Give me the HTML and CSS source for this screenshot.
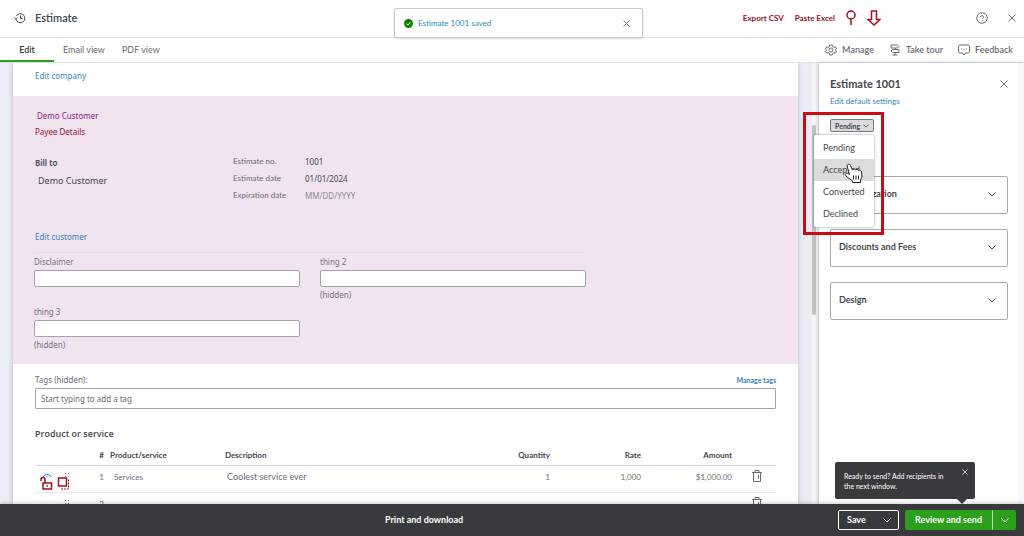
FILE: index.html
```html
<!DOCTYPE html>
<html lang="en">
  <head>
    <meta charset="UTF-8" />
    <meta name="viewport" content="width=device-width, initial-scale=1.0" />
    <title>Estimate 1001</title>
    <link rel="stylesheet" href="styles.css">
  </head>
  <body>
    <header class="topbar">
      <svg class="icon-history" width="12" height="12" viewBox="0 0 24 24">
        <path d="M4.500 8.500A9 9 0 1 1 4 15" />
        <path d="M1 11l3 3.500 3.500-3.500M13 7v6h4" />
      </svg>
      <h1>Estimate</h1>
      <div class="topbar-tools">
        <button class="tool">Export CSV</button>
        <button class="tool">Paste Excel</button>
        <button class="tool" aria-label="Pin">
          <svg width="10" height="16" viewBox="0 0 10 16"><circle cx="5" cy="5" r="4" /><path d="M5 9v6" /></svg>
        </button>
        <button class="tool" aria-label="Download">
          <svg width="14" height="16" viewBox="0 0 14 16"><path d="M4.500 1h5v8.500H13L7 15 1 9.500h3.500z" /></svg>
        </button>
      </div>
      <button class="icon-btn help" aria-label="Help">
        <svg width="12" height="12" viewBox="0 0 24 24"><circle cx="12" cy="12" r="10.500" /><path d="M9 10a3 3 0 1 1 4 3c-.8.300-1 .6-1 1.300M12 16.500v2" /></svg>
      </button>
      <button class="icon-btn" aria-label="Close">
        <svg width="8" height="8" viewBox="0 0 8 8"><path d="M.5.5l7 7M7.500.5l-7 7" /></svg>
      </button>
      <div class="toast">
        <svg class="toast-check" width="9" height="9" viewBox="0 0 18 18"><circle cx="9" cy="9" r="9" /><path d="M5 9.500l3 2.500 5-5.500" /></svg>
        <a href="#">Estimate 1001 saved</a>
        <button class="icon-btn" aria-label="Dismiss">
          <svg width="7" height="7" viewBox="0 0 8 8"><path d="M.5.5l7 7M7.500.5l-7 7" /></svg>
        </button>
      </div>
    </header>

    <nav class="tabs">
      <a class="tab active" href="#">Edit</a>
      <a class="tab" href="#">Email view</a>
      <a class="tab" href="#">PDF view</a>
      <div class="actions">
        <button class="action">
          <svg width="12" height="12" viewBox="0 0 24 24"><path d="M9.500 2h5l1 3.500 2 1.200 3.500-.9 2 4L20.500 12l2.500 2.200-2 4-3.500-.9-2 1.200-1 3.500h-5l-1-3.500-2-1.200-3.500.9-2-4L3.500 12 1 9.800l2-4 3.500.9 2-1.200z" /><circle cx="12" cy="12" r="4" /></svg>
          Manage
        </button>
        <button class="action">
          <svg width="12" height="12" viewBox="0 0 24 24"><path d="M4 2h13l3 3-3 3H4zM20 11H7l-3 3 3 3h13zM12 8v3M12 17v5M7 22h10" /></svg>
          Take tour
        </button>
        <button class="action">
          <svg width="12" height="12" viewBox="0 0 24 24"><path d="M4 2h16q3 0 3 3v10q0 3-3 3h-5l-3 4-3-4H4q-3 0-3-3V5q0-3 3-3zM6.500 10h2M11 10h2M15.500 10h2" /></svg>
          Feedback
        </button>
      </div>
    </nav>

    <main>
      <div class="editor">
        <div class="paper">
          <div class="company"><a href="#">Edit company</a></div>

          <section class="customer">
            <div class="customer-name">Demo Customer</div>
            <div class="payee">Payee Details</div>
            <div class="billing">
              <div class="bill-to">
                <strong>Bill to</strong>
                <div class="bill-name">Demo Customer</div>
              </div>
              <dl>
                <dt>Estimate no.</dt><dd>1001</dd>
                <dt>Estimate date</dt><dd>01/01/2024</dd>
                <dt>Expiration date</dt><dd class="empty">MM/DD/YYYY</dd>
              </dl>
            </div>
            <a class="edit-customer" href="#">Edit customer</a>
            <div class="fields">
              <div class="field">
                <label for="disclaimer">Disclaimer</label>
                <input type="text" id="disclaimer" />
              </div>
              <div class="field">
                <label for="thing2">thing 2</label>
                <input type="text" id="thing2" />
                <span>(hidden)</span>
              </div>
              <div class="field">
                <label for="thing3">thing 3</label>
                <input type="text" id="thing3" />
                <span>(hidden)</span>
              </div>
            </div>
          </section>

          <section class="lines">
            <div class="tags-head">
              <label for="tags">Tags (hidden):</label>
              <a href="#">Manage tags</a>
            </div>
            <input type="text" id="tags" placeholder="Start typing to add a tag" />
            <h2>Product or service</h2>
            <table>
              <thead>
                <tr>
                  <th class="col-tools"></th>
                  <th class="col-no">#</th>
                  <th class="col-product">Product/service</th>
                  <th>Description</th>
                  <th class="col-num">Quantity</th>
                  <th class="col-num">Rate</th>
                  <th class="col-num">Amount</th>
                  <th class="col-trash"></th>
                </tr>
              </thead>
              <tbody>
                <tr>
                  <td class="col-tools">
                    <svg width="32" height="20" viewBox="0 0 32 20">
                      <path class="arc" d="M3 6a4.300 4.300 0 0 1 8 0M6.500 5.500h1" />
                      <path class="red" d="M3 12h8.500v6H3zM1 10V8.500a2 2 0 0 1 4 0V12M6.500 15h1.500" />
                      <path class="grip" d="M25 2.500h1M28 2.500h1M25 5.500h1M28 5.500h1" />
                      <path class="red" d="M18.500 7h8v8h-8z" />
                      <path class="red dashed" d="M28.500 8.500v9.500H20" />
                    </svg>
                  </td>
                  <td class="col-no">1</td>
                  <td class="product">Services</td>
                  <td class="desc">Coolest service ever</td>
                  <td class="col-num">1</td>
                  <td class="col-num">1,000</td>
                  <td class="col-num">$1,000.00</td>
                  <td class="col-trash">
                    <button class="icon-btn" aria-label="Delete line 1">
                      <svg width="10" height="12" viewBox="0 0 10 12"><path d="M0 2.500h10M3 2.500v-2h4v2M1.500 2.500v9h7v-9M6.500 5v4" /></svg>
                    </button>
                  </td>
                </tr>
                <tr>
                  <td class="col-tools">
                    <svg width="32" height="20" viewBox="0 0 32 20"><path class="grip" d="M25 2.500h1M28 2.500h1M25 5.500h1M28 5.500h1" /></svg>
                  </td>
                  <td class="col-no">2</td>
                  <td></td>
                  <td></td>
                  <td></td>
                  <td></td>
                  <td></td>
                  <td class="col-trash">
                    <button class="icon-btn" aria-label="Delete line 2">
                      <svg width="10" height="12" viewBox="0 0 10 12"><path d="M0 2.500h10M3 2.500v-2h4v2M1.500 2.500v9h7v-9M6.500 5v4" /></svg>
                    </button>
                  </td>
                </tr>
              </tbody>
            </table>
          </section>
        </div>
        <div class="scroll-track"><div class="scroll-thumb"></div></div>
      </div>

      <aside class="panel">
        <div class="panel-head">
          <h2>Estimate 1001</h2>
          <button class="icon-btn" aria-label="Close panel">
            <svg width="8" height="8" viewBox="0 0 8 8"><path d="M.5.5l7 7M7.500.5l-7 7" /></svg>
          </button>
        </div>
        <a href="#">Edit default settings</a>
        <div class="status">
          <button class="status-btn">
            Pending
            <svg width="6" height="4" viewBox="0 0 8 5"><path d="M.5.5L4 4 7.500.5" /></svg>
          </button>
          <div class="status-menu">
            <button>Pending</button>
            <button class="hover">Accepted</button>
            <button>Converted</button>
            <button>Declined</button>
          </div>
          <div class="highlight"></div>
          <svg class="cursor" width="20" height="22" viewBox="0 0 20 22">
            <path d="M3 2.500C4 .500 6 1 6.500 2.500L8.500 7c.5-1.500 2.500-1.500 3 0 .5-1 2.500-1 3 .5 1-1 3 0 3 1.500l.5 5-1.500 3v2.500H8.500V18L2 13c-1.500-1.500 0-3.500 2-2.500l1.500 1z" />
            <path d="M9.500 12.500v4M12 12.500v4M14.500 12.500v4" />
          </svg>
        </div>
        <button class="card">
          Customization
          <svg width="8" height="5" viewBox="0 0 8 5"><path d="M.5.5L4 4 7.500.5" /></svg>
        </button>
        <button class="card">
          Discounts and Fees
          <svg width="8" height="5" viewBox="0 0 8 5"><path d="M.5.5L4 4 7.500.5" /></svg>
        </button>
        <button class="card">
          Design
          <svg width="8" height="5" viewBox="0 0 8 5"><path d="M.5.5L4 4 7.500.5" /></svg>
        </button>
      </aside>
    </main>

    <footer>
      <button class="print">Print and download</button>
      <div class="footer-buttons">
        <button class="save">
          Save
          <svg width="8" height="5" viewBox="0 0 8 5"><path d="M.5.5L4 4 7.500.5" /></svg>
        </button>
        <div class="split">
          <button class="send">Review and send</button>
          <button class="send-more" aria-label="More send options">
            <svg width="8" height="5" viewBox="0 0 8 5"><path d="M.5.5L4 4 7.500.5" /></svg>
          </button>
        </div>
      </div>
      <div class="tip">
        <p>Ready to send? Add recipients in the next window.</p>
        <button class="icon-btn" aria-label="Close tip">
          <svg width="6" height="6" viewBox="0 0 8 8"><path d="M.5.5l7 7M7.500.5l-7 7" /></svg>
        </button>
      </div>
    </footer>
  </body>
</html>
```
FILE: styles.css
```css
* {
  box-sizing: border-box;
}
body {
  margin: 0;
  height: 100vh;
  display: flex;
  flex-direction: column;
  overflow: hidden;
  font-family: Lato, sans-serif;
  font-size: 8px;
  line-height: 16px;
  color: #44474c;
  background: #fff;
}
h1,
h2,
p,
dl,
dd {
  margin: 0;
}
a {
  color: #2f86c0;
  text-decoration: none;
}
button {
  padding: 0;
  border: none;
  background: none;
  font: inherit;
  color: inherit;
  cursor: pointer;
}
svg {
  display: block;
  flex: none;
  fill: none;
  stroke: currentColor;
}
.icon-btn {
  color: #6b6c72;
}

/* Header */
.topbar {
  position: relative;
  flex: none;
  display: flex;
  align-items: center;
  height: 38px;
  padding: 0 8px 1px 14px;
  border-bottom: 1px solid #e3e5e8;
}
.icon-history {
  stroke-width: 2;
}
.topbar h1 {
  margin-left: 9px;
  font-size: 11px;
  font-weight: 600;
}
.topbar-tools {
  display: flex;
  align-items: center;
  gap: 11px;
  margin-left: auto;
  margin-right: 95px;
}
.tool {
  font-weight: bold;
  color: #9c1026;
}
.tool svg {
  stroke-width: 1.5;
}
.help {
  margin-right: 20px;
}
.help svg {
  stroke-width: 2;
}
.toast {
  position: absolute;
  left: 394px;
  right: 381px;
  top: 8px;
  z-index: 2;
  display: flex;
  align-items: center;
  height: 30px;
  padding: 0 12px 0 9px;
  border: 1px solid #c4c7cb;
  border-radius: 2px;
  background: #fff;
  box-shadow: 0 1px 2px rgba(0, 0, 0, 0.15);
}
.toast a {
  margin: 0 auto 0 5px;
}
.toast-check {
  stroke: #fff;
  stroke-width: 2;
}
.toast-check circle {
  fill: #108000;
  stroke: none;
}

/* Tabs */
.tabs {
  flex: none;
  display: flex;
  height: 25px;
  font-size: 9px;
  line-height: 24px;
  border-bottom: 1px solid #dcdfe8;
}
.tab {
  margin-left: 17px;
  color: #6b6c72;
}
.tab.active {
  width: 54px;
  margin: 0 -8px 0 0;
  text-align: center;
  font-weight: 600;
  color: #393a3d;
  border-bottom: 2px solid #2ca01c;
}
.actions {
  display: flex;
  gap: 15px;
  margin-left: auto;
  padding-right: 11px;
  font-weight: 600;
  color: #6b6c72;
}
.action {
  display: flex;
  align-items: center;
  gap: 5px;
}
.action svg {
  stroke-width: 2;
}

/* Editor */
main {
  flex: 1;
  display: flex;
  min-height: 0;
}
.editor {
  flex: 1;
  display: flex;
  gap: 14px;
  min-height: 0;
  padding-left: 13px;
  overflow: hidden;
  background: #ebedf4;
}
.paper {
  flex: 1;
  background: #fff;
  box-shadow: 0 0 5px rgba(60, 70, 100, 0.3);
  font-family: "Noto Sans", sans-serif;
}
.scroll-track {
  width: 7px;
  padding-top: 62px;
  background: #f5f5f7;
}
.scroll-thumb {
  width: 4px;
  height: 190px;
  background: #c1c1c1;
  border-radius: 2px;
}
.company {
  height: 33px;
  padding: 5px 22px 0;
}
.customer {
  padding: 12px 21px 11px;
  background: #f2e3f1;
}
.customer-name {
  margin-left: 3px;
  color: #951b81;
}
.payee {
  margin-left: 1px;
  color: #9c1026;
}
.billing {
  display: flex;
  height: 76px;
  margin: 13px 0 0 1px;
}
.bill-to {
  width: 198px;
  padding-top: 2px;
}
.bill-to strong {
  font-weight: 600;
}
.bill-name {
  margin: 2px 0 0 3px;
  font-size: 9px;
}
dl {
  display: grid;
  grid-template-columns: 72px auto;
  line-height: 17px;
  align-content: start;
}
dt {
  font-family: Lato, sans-serif;
  color: #6b6c72;
}
dd.empty {
  color: #8d8a94;
}
.edit-customer {
  display: block;
  margin-left: 1px;
}
.fields {
  display: grid;
  grid-template-columns: 266px 266px;
  gap: 1px 20px;
  width: 553px;
  margin-top: 7px;
  padding-top: 1px;
  border-top: 1px solid #ebdcec;
  color: #77727c;
}
.field {
  display: flex;
  flex-direction: column;
}
.field input {
  height: 17px;
}
input {
  width: 100%;
  padding: 0 5px;
  border: 1px solid #a4a2aa;
  border-radius: 2px;
  background: #fff;
  font: inherit;
}
input::placeholder {
  color: #6b6c72;
}

/* Line items */
.lines {
  padding: 8px 22px 0;
}
.tags-head {
  display: flex;
  justify-content: space-between;
  color: #6b6c72;
}
.tags-head a {
  font-family: Lato, sans-serif;
  font-size: 7px;
  font-weight: bold;
}
.lines input {
  display: block;
  height: 21px;
  padding-bottom: 1px;
  border-radius: 1px;
}
.lines h2 {
  margin-top: 17px;
  font-family: "Open Sans", sans-serif;
  font-size: 9px;
  font-weight: 600;
}
table {
  width: 100%;
  margin-top: 4px;
  table-layout: fixed;
  border-collapse: collapse;
  font-family: Lato, sans-serif;
}
th,
td {
  padding: 0;
  text-align: left;
}
th {
  height: 19px;
  border-bottom: 1px solid #d0d3e2;
}
td {
  height: 27px;
  padding-bottom: 4px;
  border-bottom: 1px solid #e6e7ea;
  color: #6b6c72;
}
.col-tools {
  width: 49px;
  padding: 0 0 0 5px;
}
.col-tools svg {
  margin-top: 4px;
}
.col-tools .red {
  stroke: #9c1026;
  stroke-width: 1.5;
}
.col-tools .dashed {
  stroke-dasharray: 2 1;
  stroke-width: 1;
}
.arc {
  stroke: #2f86c0;
}
.col-no {
  width: 26px;
  padding-right: 6px;
  text-align: right;
}
.col-product {
  width: 115px;
}
.product {
  padding-left: 4px;
}
.desc {
  padding-left: 2px;
  font-size: 9px;
}
.col-num {
  width: 91px;
  text-align: right;
}
.col-trash {
  width: 44px;
  padding: 0 0 0 20px;
}

/* Side panel */
.panel {
  position: relative;
  z-index: 1;
  width: 205px;
  padding: 12px 10px 0 11px;
  background: #fff;
  border-right: 6px solid #f8f8f9;
  box-shadow: -1px 0 3px rgba(60, 70, 100, 0.3);
}
.panel-head {
  display: flex;
  align-items: center;
  justify-content: space-between;
  height: 18px;
}
.panel-head h2 {
  font-size: 11px;
}
.panel > a {
  display: block;
}
.status {
  position: relative;
  height: 67px;
  padding-top: 10px;
}
.status-btn {
  display: flex;
  align-items: center;
  justify-content: space-between;
  width: 44px;
  height: 13px;
  padding: 0 4px;
  border: 1px solid #77797d;
  border-radius: 2px;
  background: #d9dadd;
  font-size: 7px;
  font-weight: bold;
}
.status-menu {
  position: absolute;
  z-index: 2;
  top: 26px;
  left: -16px;
  width: 60px;
  padding: 2px 0;
  background: #fff;
  border-radius: 2px;
  box-shadow: 0 0 3px rgba(0, 0, 0, 0.4);
}
.status-menu button {
  display: block;
  width: 100%;
  height: 22px;
  padding-left: 9px;
  font-size: 9px;
  text-align: left;
}
.status-menu .hover {
  background: #dcdcdc;
}
.highlight {
  position: absolute;
  z-index: 3;
  top: 3px;
  left: -27px;
  width: 81px;
  height: 123px;
  border: 3px solid #cc0a14;
}
.cursor {
  position: absolute;
  z-index: 4;
  top: 54px;
  left: 14px;
  fill: #fff;
  stroke: #222;
}
.card {
  display: flex;
  align-items: center;
  justify-content: space-between;
  width: 100%;
  height: 38px;
  margin-bottom: 15px;
  padding: 0 11px 2px 8px;
  border: 1px solid #a9abb0;
  border-radius: 2px;
  font-size: 9px;
  font-weight: bold;
}

/* Footer */
footer {
  position: relative;
  z-index: 2;
  flex: none;
  display: flex;
  align-items: center;
  justify-content: flex-end;
  height: 32px;
  padding-right: 8px;
  background: #393a3d;
  color: #fff;
  font-size: 9px;
  font-weight: bold;
  box-shadow: 0 -1px 4px rgba(0, 0, 0, 0.2);
}
.print {
  margin: 0 auto 0 385px;
}
.footer-buttons {
  display: flex;
  gap: 6px;
}
.save {
  display: flex;
  align-items: center;
  justify-content: space-between;
  width: 61px;
  height: 20px;
  padding: 0 7px 0 8px;
  border: 1px solid #fff;
  border-radius: 2px;
}
.split {
  display: flex;
  height: 20px;
  border-radius: 2px;
  background: #2ca01c;
}
.send {
  width: 87px;
}
.send-more {
  display: flex;
  align-items: center;
  justify-content: center;
  width: 24px;
  border-left: 1px solid #b5dcae;
}
.tip {
  position: absolute;
  right: 49px;
  bottom: 37px;
  display: flex;
  align-items: flex-start;
  justify-content: space-between;
  width: 140px;
  height: 37px;
  padding: 9px 7px 0 9px;
  border-radius: 2px;
  background: #393a3d;
  font-size: 7px;
  font-weight: normal;
  line-height: 10px;
}
.tip p {
  width: 104px;
}
.tip .icon-btn {
  margin-top: -2px;
  color: #fff;
}
.tip::after {
  content: "";
  position: absolute;
  right: 8px;
  top: 100%;
  border: 5px solid transparent;
  border-top-color: #393a3d;
  border-bottom: none;
}
```
